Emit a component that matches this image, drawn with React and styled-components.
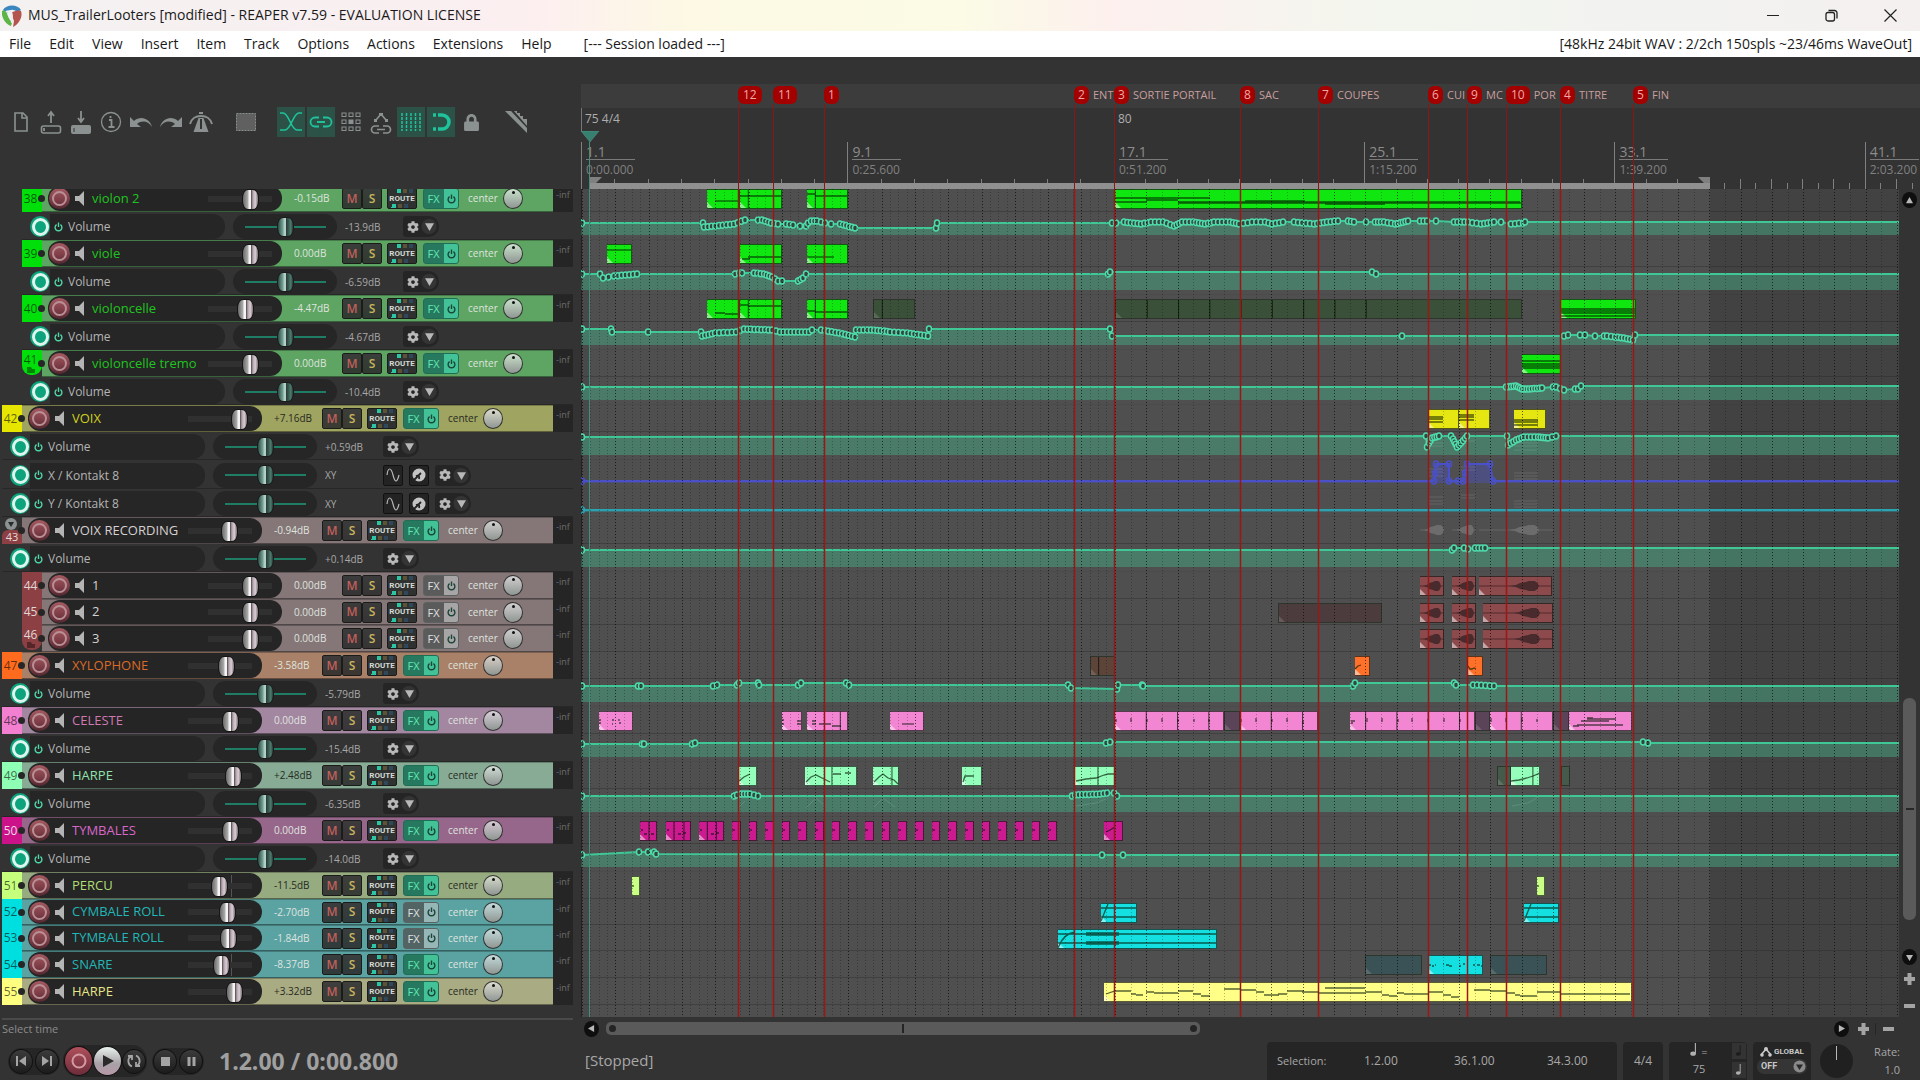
import React from 'react'
import styled, { createGlobalStyle, css } from 'styled-components'
import { FaCog, FaLock } from 'react-icons/fa'

const GlobalStyle = createGlobalStyle`
  * {
    box-sizing: border-box;
  }
  body {
    margin: 0;
    background: #333333;
    color: #a8a8a8;
    font-family: 'Open Sans', 'Noto Sans', sans-serif;
    font-size: 12px;
    overflow: hidden;
  }
  button {
    font-family: inherit;
    padding: 0;
    border: 0;
    background: none;
    color: inherit;
  }
`

/* ---------- timeline helpers ---------- */

// 75 bpm up to bar 17, 80 bpm after it
const barX = bar => (bar < 17 ? 1 + (bar - 1) * 33.3 : 534 + (bar - 17) * 31.28)

const wave = (x, w) =>
  `M${x} 10l${w * 0.2} -1 ${w * 0.15} -2 ${w * 0.2} -1 ${w * 0.1} -1 ${w * 0.2} 0 ${w * 0.1} 2 ${w * 0.05} 3 ${-w * 0.05} 3 ${-w * 0.1} 2 ${-w * 0.2} 0 ${-w * 0.1} -1 ${-w * 0.2} -1 ${-w * 0.15} -2z`

/* ---------- data ---------- */

const green = { band: '#5ea563', num: '#00df0a', name: '#1fc41f', clip: '#10e610', muted: '#3b5038', knob: '#c9e2cb' }
const red = { band: '#857677', num: '#8c4043', name: '#d6d0d0', clip: '#8d4a4d', muted: '#4d3c3e', knob: '#d2cfd0', numText: '#e0d6d6' }
const cyan = { band: '#5ba3a3', num: '#00dfe0', name: '#22b6b8', clip: '#14e0e2', muted: '#3a5155', knob: '#c3dcdc' }

const timpani = Array.from({ length: 20 }, (_, i) => ({ s: 5.5 + i / 2, e: 5.76 + i / 2, notes: 'M0 9h3' }))

const tracks = [
  {
    no: 38, name: 'violon 2', child: true, vol: '-0.15dB', fader: 43, color: green,
    clips: [
      { s: 4.75, e: 5.75, notes: 'M8 12h25' },
      { s: 5.75, e: 7, cuts: [6], notes: 'M0 7h42' },
      { s: 7.75, e: 9, cuts: [8], notes: 'M0 5h8M8 7h34' },
      { s: 17, e: 30, notes: 'M0 9h95M0 13h32M31 11h32M63 14h343M63 13h342M130 12h60M210 15h60' },
    ],
    envs: [{
      value: '-13.9dB',
      points: [[1, 11], [122, 11], [123, 15], [153, 12, 7], [164, 8, 2], [177, 8], [181, 8], [190, 11, 2], [197, 12, 1], [205, 12], [212, 13, 1], [219, 14], [225, 14], [227, 11], [230, 9], [236, 9, 1], [244, 11, 1], [250, 12], [259, 12], [274, 16, 4], [355, 16], [356, 11], [531, 11], [535, 11], [543, 10], [560, 12, 4], [570, 10, 2], [582, 10, 2], [593, 14, 2], [601, 10, 2], [612, 10, 2], [624, 12, 3], [633, 10, 2], [649, 10, 3], [658, 12, 2], [671, 10, 2], [684, 10, 2], [691, 12, 1], [702, 10, 2], [713, 10], [733, 12, 4], [746, 10, 3], [757, 9, 2], [767, 9], [773, 10, 1], [785, 10], [794, 10], [803, 10, 2], [814, 12, 2], [827, 9, 4], [839, 9], [846, 9, 1], [855, 9], [873, 10], [887, 10, 3], [900, 12, 2], [913, 10, 3], [920, 10], [930, 12], [942, 11, 2], [944, 10]],
    }],
  },
  {
    no: 39, name: 'viole', child: true, vol: '0.00dB', fader: 43, color: green,
    clips: [
      { s: 1.75, e: 2.5, notes: 'M0 6h25' },
      { s: 5.75, e: 7, notes: 'M8 13h34M2 15h8' },
      { s: 7.75, e: 9, notes: 'M0 13h27' },
    ],
    envs: [{
      value: '-6.59dB',
      points: [[1, 7], [19, 7], [22, 11], [33, 9, 1], [56, 7, 5], [154, 7], [158, 6], [161, 6], [173, 6], [183, 7, 2], [191, 10, 2], [197, 14, 1], [201, 14], [217, 14], [222, 11, 1], [225, 7], [527, 7], [529, 5], [791, 5], [795, 7]],
    }],
  },
  {
    no: 40, name: 'violoncelle', child: true, vol: '-4.47dB', fader: 38, color: green,
    clips: [
      { s: 4.75, e: 5.75, notes: 'M8 14h10M18 15h15' },
      { s: 5.75, e: 7, cuts: [6], notes: 'M0 6h8M8 7h34' },
      { s: 7.75, e: 9, cuts: [8], notes: 'M0 12h8M8 13h34' },
      { s: 9.75, e: 11, cuts: [10], muted: true },
      { s: 17, e: 30, cuts: [18, 19, 20, 21, 22, 23, 24, 25], muted: true },
      { s: 31.25, e: 33.65, notes: 'M0 10h75M0 12h75M0 14h75M0 17h75' },
    ],
    envs: [{
      value: '-4.67dB',
      points: [[1, 7], [30, 7], [31, 10], [67, 10], [120, 10], [121, 14], [134, 11, 3], [155, 10, 4], [163, 7, 1], [191, 8, 7], [199, 10, 1], [228, 10, 7], [231, 8], [240, 8], [258, 11, 4], [274, 15, 4], [275, 8], [290, 8, 3], [303, 9, 3], [309, 10, 1], [326, 11, 3], [347, 14, 5], [348, 7], [529, 7], [531, 14], [821, 14], [983, 14], [987, 13], [999, 13], [1004, 13], [1014, 14], [1023, 14], [1026, 14], [1034, 15, 1], [1043, 16, 2], [1052, 18, 2], [1054, 13]],
    }],
  },
  {
    no: 41, name: 'violoncelle tremo', child: true, last: true, vol: '0.00dB', fader: 43, color: green,
    clips: [{ s: 30, e: 31.25, notes: 'M0 7h39M0 10h39M0 12h39M0 14h39' }],
    envs: [{
      value: '-10.4dB',
      points: [[1, 10], [925, 10], [935, 9, 3], [941, 12, 2], [948, 12, 2], [961, 11, 4], [972, 10], [975, 10], [983, 13, 1], [994, 12], [997, 12], [1000, 9]],
    }],
  },
  {
    no: 42, name: 'VOIX', vol: '+7.16dB', fader: 52, dark: true,
    color: { band: '#a0a461', num: '#e6e600', name: '#cfcf1c', clip: '#e6e612', knob: '#dcdccb' },
    clips: [
      { s: 27, e: 28, notes: 'M0 8h15M0 10h15M0 13h15' },
      { s: 28, e: 29, notes: 'M0 6h15M0 8h15M0 11h15' },
      { s: 29.75, e: 30.77, notes: 'M0 11h24M0 13h24M0 16h24' },
    ],
    envs: [
      {
        value: '+0.59dB', ghost: 'M848 11h14M848 14h14M880 9h14M933 11h24M933 14h24M933 18h24',
        points: [[1, 5], [845, 4], [846, 15], [848, 11], [851, 6, 1], [858, 4, 2], [870, 4], [872, 7], [876, 15, 2], [880, 11, 1], [886, 4, 2], [926, 4], [927, 13], [935, 8, 2], [943, 5, 2], [957, 5, 3], [967, 6, 3], [975, 4, 1]],
      },
      {
        name: 'X / Kontakt 8', value: 'XY', param: true, h: 29, line: '#4a50c8', fill: '#4a50c8',
        ghost: 'M848 9h14M848 12h14M848 16h14M880 7h14M880 10h14M933 13h24M933 16h24M933 19h24',
        points: [[1, 21], [853, 21], [854, 13], [855, 4], [868, 4], [868, 21], [877, 21], [882, 21], [884, 13], [886, 4], [909, 4], [912, 21]],
      },
      {
        name: 'Y / Kontakt 8', value: 'XY', param: true, line: '#2ba3b0', fill: '#2ba3b0',
        ghost: 'M848 8h14M848 12h14M848 15h14M880 6h14M880 9h14M933 12h24M933 15h24M933 18h24',
        points: [[1, 21]],
      },
    ],
  },
  {
    no: 43, name: 'VOIX RECORDING', folder: true, vol: '-0.94dB', fader: 42, color: red,
    clips: [
      { s: 26.76, e: 27.53, ghost: true, wave: [3, 21] },
      { s: 27.77, e: 28.53, ghost: true, wave: [4, 18] },
      { s: 28.64, e: 31, ghost: true, wave: [30, 30] },
    ],
    envs: [{ value: '+0.14dB', points: [[1, 6], [871, 6], [873, 4], [883, 4], [887, 5], [894, 4], [904, 4, 2]] }],
  },
  {
    no: 44, name: '1', child: true, vol: '0.00dB', fader: 43, fxOff: true, color: red,
    clips: [
      { s: 26.76, e: 27.53, wave: [3, 18] },
      { s: 27.77, e: 28.53, wave: [4, 18] },
      { s: 28.64, e: 30.97, wave: [31, 29] },
    ],
  },
  {
    no: 45, name: '2', child: true, h: 26, vol: '0.00dB', fader: 43, fxOff: true, color: red,
    clips: [
      { s: 22.22, e: 25.55, muted: true },
      { s: 26.76, e: 27.53, wave: [3, 18] },
      { s: 27.77, e: 28.53, wave: [4, 18] },
      { s: 28.77, e: 31, wave: [31, 26] },
    ],
  },
  {
    no: 46, name: '3', child: true, last: true, vol: '0.00dB', fader: 43, fxOff: true, color: red,
    clips: [
      { s: 26.76, e: 27.53, wave: [3, 18] },
      { s: 27.77, e: 28.53, wave: [4, 18] },
      { s: 28.77, e: 31, wave: [31, 26] },
    ],
  },
  {
    no: 47, name: 'XYLOPHONE', vol: '-3.58dB', fader: 39,
    color: { band: '#a98068', num: '#ff6b1e', name: '#dc6a27', clip: '#ff7129', muted: '#5c4438', knob: '#d9cfc6' },
    clips: [
      { s: 16.27, e: 17, cuts: [16.5], muted: true },
      { s: 24.66, e: 25.15, notes: 'M0 13l3 -3 3 -1' },
      { s: 28.27, e: 28.77, notes: 'M0 10l2 3 2 0 2 -1 2 1' },
    ],
    envs: [{
      value: '-5.79dB',
      points: [[1, 7], [57, 7], [60, 7], [132, 7], [136, 6], [156, 6], [158, 4], [177, 4], [178, 6], [217, 6], [220, 4], [265, 4], [268, 6], [487, 6], [490, 9], [536, 10], [537, 6], [561, 6], [562, 7], [772, 7], [774, 4], [873, 4], [875, 6], [892, 6], [896, 6], [913, 7, 3]],
    }],
  },
  {
    no: 48, name: 'CELESTE', vol: '0.00dB', fader: 43,
    color: { band: '#a386a0', num: '#f27fd0', name: '#d078b4', clip: '#f386d2', muted: '#5b4457', knob: '#d8cfda' },
    clips: [
      { s: 1.5, e: 2.53, notes: 'M0 9h2M0 12h2M13 9h2M13 13h1M20 8v2M20 12h2' },
      { s: 7, e: 7.6, notes: 'M0 9h2M0 13h2M15 10h5M15 13h5' },
      { s: 7.75, e: 9, cuts: [8.75], notes: 'M5 10h4M5 13h4M12 13h12M25 15h9' },
      { s: 10.25, e: 11.27, notes: 'M12 13h12' },
      { s: 17, e: 20.5, cuts: [18, 19, 20], notes: 'M1 8v3M16 7v4M32 8v3M47 7v4M63 8v3M79 8v3M94 8v3' },
      { s: 20.5, e: 21, muted: true },
      { s: 21, e: 23.48, cuts: [22, 23], notes: 'M1 8v3M16 7v4M32 8v3M47 7v4M63 10v3' },
      { s: 24.5, e: 28.5, cuts: [25, 26, 27, 28], notes: 'M1 10h4M1 12h2M17 7v4M32 7v4M48 8v3M62 7v4M78 8v3M94 7v4M110 8v3' },
      { s: 28.5, e: 29, muted: true },
      { s: 29, e: 31, cuts: [30], notes: 'M1 7v4M16 7v4M32 7v4M47 8v3' },
      { s: 31, e: 31.5, muted: true },
      { s: 31.5, e: 33.52, notes: 'M4 15h6M8 14h46M12 10h28M18 7h6M18 8h29' },
    ],
    envs: [{
      value: '-15.4dB',
      points: [[1, 10], [61, 10], [63, 10], [111, 10], [114, 9], [525, 9], [529, 8], [1062, 8], [1067, 9]],
    }],
  },
  {
    no: 49, name: 'HARPE', vol: '+2.48dB', fader: 46, dark: true,
    color: { band: '#87ab95', num: '#90ffb6', name: '#90e2ac', clip: '#93ffba', muted: '#465a4b', knob: '#cfded5' },
    clips: [
      { s: 5.69, e: 6.25, notes: 'M1 15l5 -4 6 -3' },
      { s: 7.69, e: 9.27, cuts: [8.5], notes: 'M1 16l5 -5 5 -2 8 4 6 3 M28 8h8M40 7h6' },
      { s: 9.73, e: 10.53, cuts: [10.3], notes: 'M1 16l5 -5 4 -3 5 4 6 2 4 4' },
      { s: 12.4, e: 13, notes: 'M1 16l2 -6h9' },
      { s: 15.78, e: 17, cuts: [16.5], notes: 'M2 15l10 -2 10 -1 8 -3 4 -1 7 0' },
      { s: 29.2, e: 29.65, muted: true },
      { s: 29.65, e: 30.6, cuts: [30.35], notes: 'M0 15l8 -1 8 -2 6 -2 7 -3' },
      { s: 31.25, e: 31.55, muted: true },
    ],
    envs: [{
      value: '-6.35dB', ghost: 'M158 18l6 -6M225 19l10 -10 10 9M292 19l10 -10 12 9M495 17l20 -3 12 -5M931 17l16 -3 12 -7',
      points: [[1, 7], [153, 7], [156, 6], [160, 5], [169, 5, 2], [177, 7, 1], [491, 7], [494, 6], [519, 5, 6], [526, 4, 1], [533, 4], [536, 7]],
    }],
  },
  {
    no: 50, name: 'TYMBALES', vol: '0.00dB', fader: 43,
    color: { band: '#97668b', num: '#cb1289', name: '#da66ca', clip: '#cc1b90', knob: '#d6c8d4', numText: '#f0d8e8' },
    clips: [
      { s: 2.73, e: 3.26, cuts: [3], notes: 'M1 9h2M4 13h3M11 13h3' },
      { s: 3.51, e: 4.27, cuts: [3.75, 4.05], notes: 'M1 9h2M12 13h3M17 12h3' },
      { s: 4.5, e: 5.26, cuts: [4.75, 5.02], notes: 'M1 9h2M12 13h3M17 12h3' },
      ...timpani,
      { s: 16.68, e: 17.26, notes: 'M2 11l4 -2 5 -3' },
    ],
    envs: [{
      value: '-14.0dB',
      points: [[1, 11], [58, 8], [67, 8], [73, 8], [75, 10], [521, 11], [542, 11]],
    }],
  },
  {
    no: 51, name: 'PERCU', vol: '-11.5dB', fader: 31, mark: true, dark: true,
    color: { band: '#97ab80', num: '#c6ff7c', name: '#b0dc74', clip: '#c8ff84', knob: '#d6dccb' },
    clips: [{ s: 2.5, e: 2.74, notes: 'M0 10h2' }, { s: 30.49, e: 30.76, notes: 'M0 10h2' }],
  },
  {
    no: 52, name: 'CYMBALE ROLL', h: 26, vol: '-2.70dB', fader: 40, fxOff: true, color: cyan,
    clips: [
      { s: 16.6, e: 17.7, notes: 'M0 5h37M0 14h37M0 18l7 -17' },
      { s: 30.07, e: 31.2, notes: 'M0 5h37M0 14h37M0 18l7 -17' },
    ],
  },
  {
    no: 53, name: 'TYMBALE ROLL', h: 26, vol: '-1.84dB', fader: 41, fxOff: true, color: cyan,
    clips: [{ s: 15.3, e: 20.25, notes: 'M0 5h160M0 14h160M28 4h33M28 6h33M28 13h33M28 15h33M0 19C4 8 10 4 17 3' }],
  },
  {
    no: 54, name: 'SNARE', vol: '-8.37dB', fader: 34, mark: true, color: cyan,
    clips: [
      { s: 25, e: 26.8, muted: true },
      { s: 27, e: 28.77, notes: 'M1 10h2M4 11h2M7 10h1M15 9h1M18 10h3M21 11h3M31 11h2M35 9h2M39 10h1M45 10h2M49 10h3M53 11h1' },
      { s: 29, e: 30.8, muted: true },
    ],
  },
  {
    no: 55, name: 'HARPE', vol: '+3.32dB', fader: 47, dark: true,
    color: { band: '#a9ab82', num: '#ffff80', name: '#e6e68a', clip: '#ffff88', knob: '#dcdccf' },
    clips: [{
      s: 16.68, e: 33.52,
      notes: 'M2 12l9 -3h16M27 12h5M32 13h7M42 10h8M50 11h24M74 9h15M89 12h8M97 14h9M120 7h16M136 8h16M152 10h8M160 13h15M174 12h9M183 9h17M198 10h16M214 11h7M221 6h40M221 11h40M261 10h17M278 13h7M285 14h8M293 11h7M300 12h24M324 10h15M339 13h8M347 15h8M370 8h16M386 9h16M402 11h9M411 13h5M416 14h17M433 10h23M456 12h70',
    }],
  },
]

const markers = [
  { no: 12, x: 157 },
  { no: 11, x: 192 },
  { no: 1, x: 243 },
  { no: 2, x: 493, label: 'ENT' },
  { no: 3, x: 533, label: 'SORTIE PORTAIL' },
  { no: 8, x: 659, label: 'SAC' },
  { no: 7, x: 737, label: 'COUPES' },
  { no: 6, x: 847, label: 'CUI' },
  { no: 9, x: 886, label: 'MC' },
  { no: 10, x: 925, label: 'POR' },
  { no: 4, x: 979, label: 'TITRE' },
  { no: 5, x: 1052, label: 'FIN' },
]

const barLabels = [
  [1, '1.1', '0:00.000'],
  [9, '9.1', '0:25.600'],
  [17, '17.1', '0:51.200'],
  [25, '25.1', '1:15.200'],
  [33, '33.1', '1:39.200'],
  [41, '41.1', '2:03.200'],
]

/* ---------- window frame ---------- */

const Page = styled.div`
  display: flex;
  flex-direction: column;
  min-height: 100vh;
`

const TitleBar = styled.header`
  display: flex;
  align-items: center;
  height: 31px;
  padding-left: 2px;
  color: #1a1a1a;
  background: linear-gradient(90deg, #f4f1f1, #f9eff1 22%, #fdeff0 28%, #fdf9e4 36%, #fbfbe6 50%, #fdf0ee 58%, #f3f6ee 72%, #f2f3f1 85%, #f4f0ef);
`

const WindowTitle = styled.h1`
  flex: 1;
  margin: 0 0 0 6px;
  font-size: 14px;
  font-weight: 400;
  line-height: 18px;
  padding-bottom: 1px;
`

const WindowButton = styled.button`
  width: 59px;
  height: 31px;
  display: flex;
  align-items: center;
  justify-content: center;
`

const MenuBar = styled.nav`
  display: flex;
  align-items: center;
  height: 26px;
  padding: 0 8px 2px 9px;
  gap: 18px;
  background: #ffffff;
  color: #1a1a1a;
  font-size: 14px;
`

const MenuItem = styled.button`
  font-size: 14px;
  white-space: nowrap;
`

const Session = styled.span`
  flex: 1;
  margin-left: 14px;
`

const Main = styled.main`
  display: grid;
  grid-template-columns: 581px minmax(0, 1fr);
`

/* ---------- toolbar ---------- */

const Toolbar = styled.div`
  display: flex;
  align-items: center;
  height: 132px;
  padding: 0 0 2px 7px;
`

const ToolButton = styled.button`
  width: 28px;
  height: 30px;
  margin-right: 2px;
  margin-left: ${p => (p.$gap ? '15px' : '0')};
  display: flex;
  align-items: center;
  justify-content: center;
  color: ${p => (p.$on ? '#1fc39b' : '#8b9191')};
  background: ${p => (p.$on ? '#2c5248' : 'transparent')};
`

/* ---------- track panel ---------- */

const TrackPanel = styled.section`
  height: 828px;
  overflow: hidden;
  padding-right: 8px;
`

const Scrolled = styled.div`
  margin-top: -4px;
`

const TrackRow = styled.div`
  display: flex;
  align-items: stretch;
  height: ${p => p.$h}px;
  padding-left: ${p => (p.$child ? 22 : 2)}px;
`

const Band = styled.div`
  flex: 1;
  display: flex;
  align-items: center;
  background: ${p => p.$bg};
  border-bottom: 1px solid rgba(0, 0, 0, 0.4);
  border-top: 1px solid rgba(0, 0, 0, 0.25);
  color: ${p => (p.$dark ? '#262a22' : '#dfe4df')};
`

const TrackNumber = styled.div`
  position: relative;
  width: 20px;
  display: flex;
  flex-direction: column;
  align-items: center;
  justify-content: center;
  font-size: 12px;
  line-height: 14px;
  padding-right: 3px;
  background: ${p => p.$bg};
  color: ${p => p.$fg || 'rgba(0, 0, 0, 0.6)'};
  ${p =>
    p.$last &&
    css`
      border-radius: 0 0 9px 9px;
      margin-bottom: 2px;
    `}
  &::after {
    content: '';
    position: absolute;
    right: -3px;
    top: 10px;
    width: 7px;
    height: 7px;
    border-radius: 50%;
    background: #262626;
    z-index: 1;
  }
`

const FolderTag = styled.div`
  width: 20px;
  height: 14px;
  margin-right: -3px;
  border-radius: 6px 6px 0 0;
  background: #8c4043;
  color: #e8dada;
  text-align: center;
  font-size: 11px;
  line-height: 14px;
`

const Strip = styled.div`
  display: flex;
  align-items: center;
  width: 234px;
  height: 100%;
  margin-left: 6px;
  border-radius: 12px;
  background: #252525;
`

const RecordArm = styled.button`
  width: 21px;
  height: 21px;
  margin: 0 5px 0 1px;
  border-radius: 50%;
  background: linear-gradient(#a55a61, #7c3c46 60%, #542830);
  display: flex;
  align-items: center;
  justify-content: center;
  &::after {
    content: '';
    width: 11px;
    height: 11px;
    border: 2px solid #b99095;
    border-radius: 50%;
  }
`

const TrackName = styled.span`
  width: 107px;
  margin-left: 7px;
  padding-bottom: 2px;
  overflow: hidden;
  white-space: nowrap;
  font-size: 13px;
  line-height: 18px;
  color: ${p => p.$color};
`

const Fader = styled.input`
  appearance: none;
  width: 80px;
  height: 22px;
  margin: 0 0 0 1px;
  background: ${p =>
    p.$mark
      ? 'linear-gradient(90deg, transparent 51px, #555 51px 52px, transparent 52px)'
      : 'none'};
  &::-webkit-slider-runnable-track {
    height: 6px;
    background: linear-gradient(90deg, transparent 8px, #303030 8px 72px, transparent 72px);
  }
  &::-webkit-slider-thumb {
    appearance: none;
    width: 17px;
    height: 21px;
    margin-top: -7px;
    border: 1px solid #151515;
    border-radius: 6px / 9px;
    background: linear-gradient(90deg, #6a6a6a, #a6a6a6 30%, #f4f4f4 42% 50%, #4a4a4a 54%, #b5a2ad 66%, #d8cdd3 82%, #7d7379);
  }
`

const Volume = styled.span`
  width: 48px;
  margin-left: 12px;
  padding-bottom: 1px;
  font-size: 10px;
  white-space: nowrap;
`

const MuteSolo = styled.button`
  width: 20px;
  height: 21px;
  border: 1px solid #1a1c1a;
  border-radius: 2px;
  background: linear-gradient(rgba(56, 56, 56, 0.95), rgba(40, 40, 40, 0.85));
  color: ${p => (p.$solo ? '#c8b45c' : '#c0605c')};
  font-size: 12px;
  font-weight: 600;
  line-height: 16px;
`

const Route = styled.button`
  width: 30px;
  height: 21px;
  margin-left: 5px;
  border: 1px solid #1a1c1a;
  border-radius: 2px;
  color: #d5dad5;
  font-family: 'Roboto', sans-serif;
  font-size: 8px;
  font-weight: 700;
  line-height: 18px;
  background:
    linear-gradient(100deg, transparent 9px, #2cc6a4 9px 13px, transparent 13px 15px, #5c5236 15px 19px, transparent 19px 21px, #2f485c 21px 25px, transparent 25px) 0 0 / 100% 4px no-repeat,
    linear-gradient(100deg, transparent 4px, #2cc6a4 4px 8px, transparent 8px 10px, #5c5236 10px 14px, transparent 14px 16px, #2f485c 16px 20px, transparent 20px) 0 100% / 100% 4px no-repeat,
    #2f3230;
`

const Fx = styled.button`
  display: flex;
  align-items: center;
  width: 36px;
  height: 21px;
  margin-left: 6px;
  border: 1px solid ${p => (p.$off ? '#5c6262' : '#1e6e56')};
  border-radius: 3px;
  font-size: 11px;
  color: ${p => (p.$off ? '#e0e0e0' : '#62e6b4')};
  background: ${p =>
    p.$off
      ? 'linear-gradient(90deg, rgba(80, 84, 84, 0.8) 20px, rgba(190, 196, 196, 0.6) 20px)'
      : 'linear-gradient(90deg, #26795f 20px, #43c298 20px)'};
  svg {
    margin-left: 4px;
    color: #1c4438;
  }
`

const FxLabel = styled.span`
  width: 19px;
  text-align: center;
`

const Pan = styled.span`
  width: 35px;
  margin-left: 9px;
  padding-bottom: 1px;
  font-size: 10px;
`

const PanKnob = styled.button`
  position: relative;
  width: 20px;
  height: 21px;
  border: 1px solid #333;
  border-radius: 50%;
  background: linear-gradient(${p => p.$bg}, #8f9692);
  &::after {
    content: '';
    position: absolute;
    left: 8px;
    top: 2px;
    width: 3px;
    height: 3px;
    border-radius: 50%;
    background: #111;
  }
`

const Meter = styled.div`
  width: 20px;
  padding: 4px 0 0 3px;
  background: #252525;
  color: #6e6e6e;
  font-size: 9px;
  line-height: 12px;
`

const EnvRow = styled.div`
  display: flex;
  align-items: center;
  height: ${p => p.$h}px;
  margin-left: ${p => (p.$child ? 22 : 2)}px;
  padding-top: 2px;
  border-bottom: 1px solid #272727;
`

const EnvArm = styled.button`
  width: 20px;
  height: 21px;
  margin-left: 8px;
  border-radius: 50%;
  background: #0da37c;
  display: flex;
  align-items: center;
  justify-content: center;
  &::after {
    content: '';
    width: 11px;
    height: 12px;
    border: 3px solid #dff5ee;
    border-radius: 50%;
  }
`

const EnvName = styled.div`
  display: flex;
  align-items: center;
  gap: 5px;
  width: 175px;
  height: 25px;
  border-radius: 0 12px 12px 0;
  background: #262626;
  color: #b4b4b4;
  svg {
    color: #4fd6a8;
    margin-left: 4px;
  }
`

const EnvFaderBox = styled.div`
  width: 104px;
  height: 25px;
  margin-left: 8px;
  border-radius: 13px;
  background: #262626;
`

const EnvFader = styled.input`
  appearance: none;
  width: 97px;
  height: 25px;
  margin: 0 0 0 4px;
  background: none;
  &::-webkit-slider-runnable-track {
    height: 2px;
    background: linear-gradient(90deg, transparent 8px, #1f7c65 8px 89px, transparent 89px);
  }
  &::-webkit-slider-thumb {
    appearance: none;
    width: 17px;
    height: 20px;
    margin-top: -9px;
    border: 1px solid #1b1b1b;
    border-radius: 6px / 9px;
    background: linear-gradient(90deg, #2c4e46, #6f9a8e 30%, #b4cfc8 44% 50%, #2a3a36 54%, #35594f 70%, #4f7a6e 85%, #2a3a36);
  }
`

const EnvValue = styled.span`
  width: 50px;
  margin-left: 8px;
  font-size: 10px;
`

const EnvGear = styled.button`
  display: flex;
  align-items: center;
  width: 36px;
  height: 21px;
  margin-left: ${p => (p.$after ? 6 : 8)}px;
  padding-left: 4px;
  gap: 6px;
  border-radius: 3px 10px 10px 3px;
  background: radial-gradient(circle at 26px 50%, #343434 7px, #252525 8px);
  color: #b8b8b8;
`

const ParamButton = styled.button`
  width: 20px;
  height: 21px;
  margin-left: ${p => (p.$after ? 6 : 8)}px;
  border: 1px solid #111;
  border-radius: 2px;
  background: #232323;
  display: flex;
  align-items: center;
  justify-content: center;
`

/* ---------- ruler ---------- */

const Ruler = styled.div`
  position: relative;
  height: 132px;
  padding-top: 27px;
  overflow: hidden;
`

const MarkerLane = styled.div`
  position: relative;
  height: 24px;
  background: #3c3c3c;
`

const MarkerFlag = styled.div`
  position: absolute;
  top: 2px;
  display: flex;
  align-items: center;
  gap: 4px;
  overflow: hidden;
  color: #c79f9f;
  font-size: 11px;
  line-height: 18px;
  white-space: nowrap;
`

const MarkerBadge = styled.span`
  flex: none;
  min-width: 15px;
  padding: 0 ${p => (p.$wide ? 5 : 4)}px;
  height: 18px;
  border-radius: 6px;
  background: #a30000;
  color: #f0a8a8;
  text-align: center;
  font-size: 12px;
`

const TempoLane = styled.div`
  position: relative;
  height: 23px;
`

const TempoMark = styled.span`
  position: absolute;
  top: 0;
  height: 23px;
  padding-left: 3px;
  border-left: 1px solid #777;
  line-height: 22px;
  color: #adadad;
`

const TimeLane = styled.div`
  position: relative;
  height: 58px;
`

const BarLabel = styled.div`
  position: absolute;
  top: 11px;
  height: 47px;
  padding-left: 4px;
  border-left: 1px solid #808080;
  color: #8c8c8c;
`

const BarNumber = styled.div`
  width: 49px;
  height: 18px;
  border-bottom: 1px solid #7a7a7a;
  font-size: 14px;
  line-height: 20px;
`

const BarTime = styled.div`
  font-size: 12px;
  line-height: 19px;
  color: #808080;
`

const RulerTicks = styled.svg`
  position: absolute;
  left: 0;
  bottom: 0;
  width: 100%;
  height: 58px;
`

const Overlay = styled.svg`
  position: absolute;
  inset: 0;
  width: 100%;
  height: 100%;
  pointer-events: none;
`

/* ---------- arrange view ---------- */

const ArrangeRow = styled.div`
  display: flex;
  height: 828px;
`

const Arrange = styled.div`
  position: relative;
  flex: 1;
  min-width: 0;
  overflow: hidden;
  background: linear-gradient(90deg, #222222 1px, #494949 1px 9px, #4f4f4f 9px 1129px, #424242 1129px);
`

const Lane = styled.div`
  position: relative;
  height: ${p => p.$h}px;
  border-bottom: 1px solid rgba(${p => (p.$env ? '0, 0, 0, 0.04' : '30, 30, 30, 0.3')});
`

const Clip = styled.div`
  position: absolute;
  top: 4px;
  height: 20px;
  overflow: hidden;
  background: ${p => p.$bg};
  ${p =>
    !p.$ghost &&
    css`
      border: 1px solid ${p.$muted ? '#2d352d' : 'rgba(20, 25, 20, 0.7)'};
      border-left-width: ${p.$muted ? '1px' : '0'};
    `}
  &::before {
    content: '';
    position: absolute;
    display: ${p => (p.$corner ? 'block' : 'none')};
    left: 0;
    bottom: 0;
    border: 3px solid transparent;
    border-left-color: rgba(255, 255, 255, ${p => (p.$muted ? 0.15 : 0.5)});
    border-bottom-color: rgba(255, 255, 255, ${p => (p.$muted ? 0.15 : 0.5)});
  }
  svg {
    position: absolute;
    left: 0;
    top: -1px;
    width: 100%;
    height: 20px;
  }
`

const EnvCanvas = styled.svg`
  position: absolute;
  inset: 0;
  width: 100%;
  height: 100%;
`

const VScroll = styled.div`
  display: flex;
  flex-direction: column;
  align-items: center;
  width: 21px;
  padding-top: 3px;
`

const VThumb = styled.div`
  display: flex;
  flex: none;
  align-items: center;
  justify-content: center;
  width: 13px;
  height: 222px;
  margin: 490px 0 29px;
  border-radius: 6px;
  background: #5a5a5a;
  &::after {
    content: '';
    width: 8px;
    height: 2px;
    background: #262626;
  }
`

const RoundArrow = styled.button`
  display: flex;
  align-items: center;
  justify-content: center;
  flex: none;
  width: 15px;
  height: 16px;
  border-radius: 50%;
  background: #0e0e0e;
`

const ZoomButton = styled.button`
  display: flex;
  flex: none;
  align-items: center;
  justify-content: center;
  width: 14px;
  height: ${p => (p.$tall ? 27 : 14)}px;
`

/* ---------- bottom ---------- */

const StatusLine = styled.div`
  height: 22px;
  margin: 1px 8px 0 2px;
  border-top: 2px solid #4a4a4a;
  font-size: 11px;
  line-height: 18px;
  color: #8c8c8c;
`

const HScroll = styled.div`
  display: flex;
  align-items: center;
  height: 23px;
  padding: 0 25px 0 3px;
  gap: 7px;
`

const HThumb = styled.div`
  display: flex;
  align-items: center;
  justify-content: space-between;
  width: 594px;
  height: 13px;
  padding: 0 3px;
  border-radius: 5px;
  background: #5a5a5a;
`

const HDot = styled.span`
  width: ${p => (p.$bar ? 2 : 7)}px;
  height: ${p => (p.$bar ? 9 : 7)}px;
  border-radius: ${p => (p.$bar ? 0 : 4)}px;
  background: #242424;
`

const HSpacer = styled.div`
  flex: 1;
`

const HDivider = styled.div`
  width: 1px;
  height: 12px;
  margin: 0 -2px;
  background: #262626;
`

const Transport = styled.footer`
  display: flex;
  align-items: center;
  height: 40px;
  padding: 2px 0 0 8px;
  overflow: hidden;
`

const TransportGroup = styled.div`
  display: flex;
  align-items: center;
  gap: ${p => (p.$tight ? 0 : 2)}px;
  margin-right: ${p => (p.$first ? 3 : 5)}px;
  padding: 1px;
  border-radius: 15px;
  background: #262626;
`

const TransportButton = styled.button`
  display: flex;
  align-items: center;
  justify-content: center;
  width: ${p => (p.$big ? 29 : 24)}px;
  height: ${p => (p.$big ? 30 : 25)}px;
  border: 1px solid #111;
  border-radius: 50%;
  background: ${p => p.$bg || 'linear-gradient(#3c3c3c, #1c1c1c)'};
  color: #a4a4a4;
`

const Clock = styled.div`
  width: 366px;
  margin-left: 10px;
  font-size: 23px;
  font-weight: 700;
  line-height: 36px;
  color: #a0a0a0;
`

const PlayState = styled.div`
  flex: 1;
  padding-bottom: 2px;
  font-size: 15px;
`

const TransportBox = styled.div`
  display: flex;
  align-items: center;
  align-self: stretch;
  justify-content: center;
  margin-right: 6px;
  padding-bottom: 2px;
  border-radius: 4px 4px 0 0;
  background: #252525;
`

const SelectionBox = styled(TransportBox)`
  display: grid;
  grid-template-columns: 87px 90px 93px 1fr;
  width: 350px;
  padding-left: 10px;
`

const SelectionLabel = styled.span`
  font-size: 11px;
`

const TimeSig = styled(TransportBox)`
  width: 40px;
`

const TempoBox = styled(TransportBox)`
  width: 78px;
  justify-content: space-between;
`

const Tempo = styled.div`
  width: 60px;
  text-align: center;
  font-size: 11px;
  line-height: 17px;
`

const NoteColumn = styled.div`
  display: flex;
  flex-direction: column;
  gap: 3px;
  margin-right: 1px;
`

const NoteCell = styled.div`
  display: flex;
  align-items: center;
  justify-content: center;
  width: 14px;
  height: 16px;
  background: #333;
`

const GlobalBox = styled(TransportBox)`
  flex-direction: column;
  width: 58px;
  gap: 2px;
  color: #c8c8c8;
  font-family: 'Roboto', sans-serif;
  font-size: 8px;
  font-weight: 700;
`

const GlobalRow = styled.div`
  display: flex;
  align-items: center;
  gap: 2px;
`

const GlobalMode = styled.button`
  display: flex;
  align-items: center;
  justify-content: space-between;
  width: 50px;
  height: 15px;
  padding: 0 1px 0 4px;
  border-radius: 7px;
  background: #353535;
  font-size: 9px;
  font-weight: 700;
`

const RateKnob = styled.button`
  width: 33px;
  height: 34px;
  margin: 0 17px 0 3px;
  border-radius: 50%;
  background: linear-gradient(90deg, transparent 16px, #b8b8b8 16px 17px, transparent 17px) 0 2px / 100% 14px no-repeat, #202020;
`

const Rate = styled.div`
  width: 50px;
  padding-right: 20px;
  text-align: right;
  font-size: 11px;
  line-height: 18px;
`

/* ---------- small drawings ---------- */

const Power = () => (
  <svg width="9" height="10" viewBox="0 0 9 10" fill="none" stroke="currentColor" strokeWidth="1.4">
    <path d="M2.6 2.6a3.4 3.4 0 1 0 3.8 0M4.5 .5v4.5" />
  </svg>
)

const Speaker = () => (
  <svg width="10" height="15" viewBox="0 0 10 15">
    <path d="M0 5h4L9 0v15L4 10H0z" fill="#b4b4b4" />
  </svg>
)

const Triangle = ({ dir = 'down', size = 7 }) => {
  const turn = { down: 0, left: 90, up: 180, right: 270 }[dir]
  return (
    <svg width={size} height={size} viewBox="0 0 8 8">
      <path d="M0 1h8L4 8z" fill="#b8b8b8" transform={`rotate(${turn} 4 4)`} />
    </svg>
  )
}

const Plus = () => (
  <svg width="11" height="12" viewBox="0 0 11 12">
    <path d="M5.5 0v12M0 6h11" stroke="#a4a4a4" strokeWidth="4" />
  </svg>
)

const Minus = () => (
  <svg width="11" height="4" viewBox="0 0 11 4">
    <rect width="11" height="4" fill="#a4a4a4" />
  </svg>
)

const Note = ({ size = 14, color = '#b0b0b0' }) => (
  <svg width="8" height={size} viewBox="0 0 8 14">
    <ellipse cx="3" cy="11.5" rx="3" ry="2.3" fill={color} />
    <path d="M5.5 0v11.5" stroke={color} strokeWidth="1.2" />
  </svg>
)

const Logo = () => (
  <svg width="20" height="22" viewBox="0 0 20 22">
    <path d="M1 5C4 -1 16 -1 19 5l-4 2C12 4 7 4 5 8z" fill="#3a87c0" />
    <path d="M0 6c-1 6 3 13 9 15l1-3C7 14 5 10 5 8L2 5z" fill="#5cb544" />
    <path d="M9 8c3-2 7-3 10-2 2 6-2 13-8 16l1-6z" fill="#b5544c" />
    <path d="M4 7c3-2 6 0 6 3v8" fill="none" stroke="#e8eef2" strokeWidth="1.8" />
  </svg>
)

const stroke = { fill: 'none', stroke: 'currentColor', strokeWidth: 1.3 }

const tools = [
  { name: 'New project', art: <path d="M6 4h8l4 4v14H6zM13 4v5h5" {...stroke} strokeWidth="1.6" /> },
  { name: 'Open project', art: <><rect x="2.5" y="17" width="19" height="7" rx="2" {...stroke} strokeWidth="1.6" /><path d="M5 19v3M12 14V3M9 7l3-4 3 4" {...stroke} strokeWidth="1.8" /></> },
  { name: 'Save project', art: <><rect x="2" y="16" width="20" height="9" rx="2" fill="currentColor" /><path d="M5 19v4" stroke="#333" /><path d="M12 2v11M9 9l3 4 3-4" {...stroke} strokeWidth="1.8" /></> },
  { name: 'Project settings', art: <><circle cx="12" cy="13" r="9.5" {...stroke} /><path d="M10 11h2.500v7M9.500 18h6M11.500 7v2" {...stroke} strokeWidth="1.8" /></> },
  { name: 'Undo', art: <path d="M1 8v10h11l-4-3c5-4 11-3 15 3C21 10 12 6 5 12z" fill="currentColor" /> },
  { name: 'Redo', art: <path d="M23 8v10H12l4-3c-5-4-11-3-15 3C3 10 12 6 19 12z" fill="currentColor" /> },
  { name: 'Metronome', art: <><path d="M9.500 9h5l5 14h-15z" fill="currentColor" /><path d="M12 10v10" stroke="#333" strokeWidth="2" /><path d="M1 15c2-6 5-8 11-8s9 2 11 8M10 4h4" {...stroke} strokeWidth="2" /></> },
  { name: 'Marquee', gap: true, art: <rect x="2.5" y="4.5" width="19" height="17" fill="#606060" stroke="currentColor" strokeDasharray="2 1" /> },
  { name: 'Auto crossfade', on: true, gap: true, art: <path d="M1 4h3c6 0 8 17 14 17h5M23 4h-3C14 4 12 21 6 21H1" {...stroke} strokeWidth="1.6" /> },
  { name: 'Item grouping', on: true, art: <path d="M10 8.500H6a4 4 0 0 0 0 9h4M14 8.500h4a4 4 0 0 1 0 9h-4M8 13h8" {...stroke} strokeWidth="1.8" /> },
  {
    name: 'Ripple editing',
    art: [0, 1, 2].map(r => [0, 1, 2].map(c => (
      <rect key={`${r}${c}`} x={3 + c * 7} y={4 + r * 7} width="4" height="3.5" stroke="currentColor" fill={r === 1 && c === 1 ? 'currentColor' : 'none'} />
    ))),
  },
  { name: 'Envelope points', art: <><path d="M7 11l5-6 5 6M10 17H6a3 3 0 0 0 0 7h4M14 17h4a3 3 0 0 1 0 7h-4M8 20.500h8" {...stroke} strokeWidth="1.7" /><path d="M10 4h4v3h-4zM5 10h3v3H5zM16 10h3v3h-3z" fill="currentColor" /></> },
  { name: 'Grid', on: true, art: <path d="M3 4v18M7.500 4v18M12 4v18M16.500 4v18M21 4v18" {...stroke} strokeDasharray="3 1" strokeWidth="1.5" /> },
  { name: 'Snap', on: true, art: <path d="M4 6h3M4 20h3M9 6h4a7 7 0 0 1 0 14H9" fill="none" stroke="currentColor" strokeWidth="3.5" /> },
  { name: 'Lock', art: null },
  { name: 'Draw tool', gap: true, art: <><path d="M1 2h6l16 17v5z" fill="currentColor" /><path d="M10 2h3v2h3v3h3v3h4v7z" fill="currentColor" /></> },
]

/* ---------- components ---------- */

const Track = ({ t }) => (
  <TrackRow $h={t.h || 27} $child={t.child}>
    {t.folder ? (
      <TrackNumber $bg="#333333">
        <svg width="12" height="12" viewBox="0 0 12 12">
          <circle cx="6" cy="6" r="6" fill="#8d9292" />
          <path d="M3 4h6L6 9z" fill="#2a2a2a" />
        </svg>
        <FolderTag>{t.no}</FolderTag>
      </TrackNumber>
    ) : (
      <TrackNumber $bg={t.color.num} $fg={t.color.numText} $last={t.last}>
        {t.no}
        {t.last && (
          <svg width="8" height="6" viewBox="0 0 8 6">
            <path d="M0 0h4l1 2h3v4H0z" fill="rgba(0, 0, 0, 0.4)" />
          </svg>
        )}
      </TrackNumber>
    )}
    <Band $bg={t.color.band} $dark={t.dark}>
      <Strip>
        <RecordArm aria-label={`Arm ${t.name}`} />
        <Speaker />
        <TrackName $color={t.color.name}>{t.name}</TrackName>
        <Fader type="range" min="0" max="64" defaultValue={t.fader} $mark={t.mark} aria-label={`${t.name} volume`} />
      </Strip>
      <Volume>{t.vol}</Volume>
      <MuteSolo>M</MuteSolo>
      <MuteSolo $solo>S</MuteSolo>
      <Route>ROUTE</Route>
      <Fx $off={t.fxOff}>
        <FxLabel>FX</FxLabel>
        <Power />
      </Fx>
      <Pan>center</Pan>
      <PanKnob $bg={t.color.knob} aria-label={`${t.name} pan`} />
    </Band>
    <Meter>-inf</Meter>
  </TrackRow>
)

const Envelope = ({ env, child }) => (
  <EnvRow $h={env.h || 28} $child={child}>
    <EnvArm aria-label="Arm envelope" />
    <EnvName>
      <Power />
      {env.name || 'Volume'}
    </EnvName>
    <EnvFaderBox>
      <EnvFader type="range" min="0" max="81" defaultValue="40" aria-label={env.name || 'Volume'} />
    </EnvFaderBox>
    <EnvValue>{env.value}</EnvValue>
    {env.param && (
      <>
        <ParamButton aria-label="Modulation">
          <svg width="14" height="14" viewBox="0 0 14 14" fill="none" stroke="#b8b8b8" strokeWidth="1.2">
            <path d="M1 7c1-8 4-8 6 0s4 8 6 0" />
          </svg>
        </ParamButton>
        <ParamButton $after aria-label="Learn">
          <svg width="14" height="14" viewBox="0 0 14 14">
            <circle cx="7" cy="7" r="6.5" fill="#c4c4c4" />
            <path d="M1 13L9 5M4 8c2-1 4 0 3 3" fill="none" stroke="#232323" strokeWidth="1.8" />
          </svg>
        </ParamButton>
      </>
    )}
    <EnvGear $after={env.param} aria-label="Envelope options">
      <FaCog size={12} />
      <Triangle size={9} />
    </EnvGear>
  </EnvRow>
)

const ClipView = ({ clip, color }) => {
  const left = barX(clip.s)
  const width = barX(clip.e) - left
  const bg = clip.ghost ? 'none' : clip.muted ? color.muted : color.clip
  return (
    <Clip $bg={bg} $muted={clip.muted} $ghost={clip.ghost} $corner={!clip.ghost && width > 14} style={{ left, width }}>
      <svg>
        {(clip.cuts || []).map(c => (
          <path key={c} d={`M${barX(c) - left} 0v20`} stroke="rgba(10, 20, 10, 0.75)" />
        ))}
        {clip.notes && <path d={clip.notes} fill="none" stroke="rgba(0, 20, 0, 0.65)" strokeWidth="1.3" />}
        {clip.wave && (
          <>
            <path d={`M0 10h${width}`} stroke={clip.ghost ? '#666' : '#55282a'} />
            <path d={wave(...clip.wave)} fill={clip.ghost ? '#6c6c6c' : '#4a2b2d'} />
          </>
        )}
      </svg>
    </Clip>
  )
}

const EnvelopeLane = ({ env }) => {
  const line = env.line || '#3fc795'
  const last = env.points[env.points.length - 1]
  const d = env.points.map(p => `${p[0]} ${p[1]}`).join(' L') + ` L1800 ${last[1]}`
  // the third value of a point asks for that many points between it and the previous one
  const dots = env.points.flatMap((p, i) => {
    const n = p[2] || 0
    const prev = env.points[i - 1] || p
    const between = Array.from({ length: n }, (_, k) => {
      const f = (k + 1) / (n + 1)
      return [prev[0] + (p[0] - prev[0]) * f, prev[1] + (p[1] - prev[1]) * f]
    })
    return [...between, p]
  })
  return (
    <Lane $h={env.h || 28} $env>
      <EnvCanvas>
        <path d={`M0 23 L${d} V23 z`} fill={env.fill || '#45a884'} opacity={env.fill ? 0.4 : 0.5} />
        {env.ghost && <path d={env.ghost} fill="none" stroke="rgba(255, 255, 255, 0.12)" />}
        <path d={`M${d}`} fill="none" stroke={line} strokeWidth="2" />
        {dots.map(([x, y], i) => (
          <ellipse key={i} cx={x} cy={y} rx="2.5" ry="3" fill={env.fill ? 'none' : '#34453f'} stroke={env.line || '#4fdcab'} strokeWidth="1.5" />
        ))}
      </EnvCanvas>
    </Lane>
  )
}

const gridLines = []
for (let bar = 1; bar < 56; bar += bar < 17 ? 0.25 : 0.5) {
  gridLines.push(bar)
}

const Grid = () => (
  <Overlay>
    {gridLines.map(bar => (
      <path
        key={bar}
        d={`M${Math.round(barX(bar)) + 0.5} 0V828`}
        stroke={bar % 1 ? 'rgba(0, 0, 0, 0.28)' : 'rgba(0, 0, 0, 0.65)'}
        strokeDasharray="1 2"
      />
    ))}
    {markers.map(m => (
      <path key={m.no} d={`M${m.x + 0.5} 0V828`} stroke="#9c1616" strokeWidth="1.5" />
    ))}
    <path d="M8.5 0V828" stroke="#3f8f7c" />
  </Overlay>
)

const RulerView = () => (
  <Ruler>
    <MarkerLane>
      {markers.map((m, i) => {
        const next = markers[i + 1]
        return (
          <MarkerFlag key={m.no} style={{ left: m.x, width: next ? next.x - m.x : 120 }}>
            <MarkerBadge $wide={m.no > 9}>{m.no}</MarkerBadge>
            {m.label}
          </MarkerFlag>
        )
      })}
    </MarkerLane>
    <TempoLane>
      <TempoMark style={{ left: barX(1) - 1 }}>75 4/4</TempoMark>
      <TempoMark style={{ left: barX(17) - 1 }}>80</TempoMark>
    </TempoLane>
    <TimeLane>
      {barLabels.map(([bar, label, time]) => (
        <BarLabel key={bar} style={{ left: barX(bar) - 1 }}>
          <BarNumber>{label}</BarNumber>
          <BarTime>{time}</BarTime>
        </BarLabel>
      ))}
      <RulerTicks>
        {gridLines.filter(b => b % 0.5 === 0).map(b => (
          <path key={b} d={`M${Math.round(barX(b)) - 0.5} ${b % 1 ? 52 : 48}V58`} stroke="#808080" />
        ))}
        <rect x="9" y="52" width="1120" height="6" fill="#909090" />
        <path d="M9 46h12l-6 6H9zM1129 46h-12l6 6h6z" fill="#808080" />
        <path d="M0 0h18L9 11z" fill="#37806f" stroke="#5a9c8d" strokeWidth="0.5" />
      </RulerTicks>
    </TimeLane>
    <Overlay>
      {markers.map(m => (
        <path key={m.no} d={`M${m.x + 0.5} 47V132`} stroke="#8f1414" />
      ))}
      <path d="M8.5 85V132" stroke="#3f8f7c" />
    </Overlay>
  </Ruler>
)

const App = () => (
  <Page>
    <GlobalStyle />
    <TitleBar>
      <Logo />
      <WindowTitle>MUS_TrailerLooters [modified] - REAPER v7.59 - EVALUATION LICENSE</WindowTitle>
      <WindowButton aria-label="Minimize">
        <svg width="12" height="12"><path d="M0 5.500h12" stroke="#222" /></svg>
      </WindowButton>
      <WindowButton aria-label="Restore">
        <svg width="13" height="13" fill="none" stroke="#222" strokeWidth="1.3">
          <rect x="1" y="3.5" width="8.5" height="8.5" rx="2" />
          <path d="M3.500 1.500h6a2.500 2.500 0 0 1 2.500 2.500v5.500" />
        </svg>
      </WindowButton>
      <WindowButton aria-label="Close">
        <svg width="13" height="13"><path d="M.5 .5l12 12M12.500 .5l-12 12" stroke="#222" strokeWidth="1.2" /></svg>
      </WindowButton>
    </TitleBar>
    <MenuBar>
      {['File', 'Edit', 'View', 'Insert', 'Item', 'Track', 'Options', 'Actions', 'Extensions', 'Help'].map(m => (
        <MenuItem key={m}>{m}</MenuItem>
      ))}
      <Session>[--- Session loaded ---]</Session>
      <span>[48kHz 24bit WAV : 2/2ch 150spls ~23/46ms WaveOut]</span>
    </MenuBar>

    <Main>
      <Toolbar>
        {tools.map(tool => (
          <ToolButton key={tool.name} $on={tool.on} $gap={tool.gap} aria-label={tool.name}>
            {tool.art ? <svg width="24" height="26" viewBox="0 0 24 26">{tool.art}</svg> : <FaLock size={17} />}
          </ToolButton>
        ))}
      </Toolbar>
      <RulerView />

      <TrackPanel>
        <Scrolled>
          {tracks.map(t => (
            <React.Fragment key={t.no}>
              <Track t={t} />
              {(t.envs || []).map((env, i) => (
                <Envelope key={i} env={env} child={t.child} />
              ))}
            </React.Fragment>
          ))}
        </Scrolled>
      </TrackPanel>
      <ArrangeRow>
        <Arrange>
          <Scrolled>
            {tracks.map(t => (
              <React.Fragment key={t.no}>
                <Lane $h={t.h || 27}>
                  {t.clips.map(clip => (
                    <ClipView key={clip.s} clip={clip} color={t.color} />
                  ))}
                </Lane>
                {(t.envs || []).map((env, i) => (
                  <EnvelopeLane key={i} env={env} />
                ))}
              </React.Fragment>
            ))}
          </Scrolled>
          <Grid />
        </Arrange>
        <VScroll>
          <RoundArrow aria-label="Scroll up"><Triangle dir="up" /></RoundArrow>
          <VThumb />
          <RoundArrow aria-label="Scroll down"><Triangle /></RoundArrow>
          <ZoomButton $tall aria-label="Zoom in tracks"><Plus /></ZoomButton>
          <ZoomButton $tall aria-label="Zoom out tracks"><Minus /></ZoomButton>
        </VScroll>
      </ArrangeRow>

      <StatusLine>Select time</StatusLine>
      <HScroll>
        <RoundArrow aria-label="Scroll left"><Triangle dir="left" /></RoundArrow>
        <HThumb>
          <HDot />
          <HDot $bar />
          <HDot />
        </HThumb>
        <HSpacer />
        <RoundArrow aria-label="Scroll right"><Triangle dir="right" /></RoundArrow>
        <ZoomButton aria-label="Zoom in"><Plus /></ZoomButton>
        <HDivider />
        <ZoomButton aria-label="Zoom out"><Minus /></ZoomButton>
      </HScroll>
    </Main>

    <Transport>
      <TransportGroup $first>
        <TransportButton aria-label="Go to start">
          <svg width="10" height="10"><path d="M1 0v10" stroke="currentColor" strokeWidth="2" /><path d="M10 0v10L3 5z" fill="currentColor" /></svg>
        </TransportButton>
        <TransportButton aria-label="Go to end">
          <svg width="10" height="10"><path d="M9 0v10" stroke="currentColor" strokeWidth="2" /><path d="M0 0v10l7-5z" fill="currentColor" /></svg>
        </TransportButton>
      </TransportGroup>
      <TransportGroup $tight>
        <TransportButton $big $bg="linear-gradient(#b0505c, #6c2c3a)" aria-label="Record">
          <svg width="16" height="16"><circle cx="8" cy="8" r="6.5" fill="none" stroke="#d49aa0" strokeWidth="2" /></svg>
        </TransportButton>
        <TransportButton $big $bg="linear-gradient(#e8f2ee, #a8a0a6 60%, #b898a8)" aria-label="Play">
          <svg width="12" height="12"><path d="M1 0l11 6-11 6z" fill="#2a2a2a" /></svg>
        </TransportButton>
        <TransportButton aria-label="Repeat">
          <svg width="16" height="16" fill="none" stroke="currentColor" strokeWidth="1.8">
            <path d="M6 13.500a6 6 0 0 1-1-10.500M2 3h4v4M10 2.500a6 6 0 0 1 1 10.500M14 13h-4V9" />
          </svg>
        </TransportButton>
      </TransportGroup>
      <TransportGroup>
        <TransportButton aria-label="Stop"><svg width="9" height="9"><rect width="9" height="9" fill="currentColor" /></svg></TransportButton>
        <TransportButton aria-label="Pause"><svg width="9" height="9"><path d="M2 0v9M7 0v9" stroke="currentColor" strokeWidth="3" /></svg></TransportButton>
      </TransportGroup>
      <Clock>1.2.00 / 0:00.800</Clock>
      <PlayState>[Stopped]</PlayState>
      <SelectionBox>
        <SelectionLabel>Selection:</SelectionLabel>
        <span>1.2.00</span>
        <span>36.1.00</span>
        <span>34.3.00</span>
      </SelectionBox>
      <TimeSig>4/4</TimeSig>
      <TempoBox>
        <Tempo>
          <Note size={13} /> =<br />
          75
        </Tempo>
        <NoteColumn>
          <NoteCell><Note size={11} color="#1c1c1c" /></NoteCell>
          <NoteCell><Note size={11} /></NoteCell>
        </NoteColumn>
      </TempoBox>
      <GlobalBox>
        <GlobalRow>
          <svg width="12" height="10" fill="none" stroke="currentColor" strokeWidth="1.6">
            <path d="M1 8l5-6 5 6" />
            <circle cx="6" cy="2" r="1.2" fill="currentColor" />
            <circle cx="2" cy="8" r="1" fill="currentColor" />
            <circle cx="10" cy="8" r="1" fill="currentColor" />
          </svg>
          GLOBAL
        </GlobalRow>
        <GlobalMode>
          OFF
          <svg width="13" height="13">
            <circle cx="6.5" cy="6.5" r="6" fill="#8a8a8a" />
            <path d="M3 4.500h7L6.500 10z" fill="#2a2a2a" />
          </svg>
        </GlobalMode>
      </GlobalBox>
      <RateKnob aria-label="Play rate" />
      <Rate>
        Rate:
        <br />
        1.0
      </Rate>
    </Transport>
  </Page>
)

export default App
